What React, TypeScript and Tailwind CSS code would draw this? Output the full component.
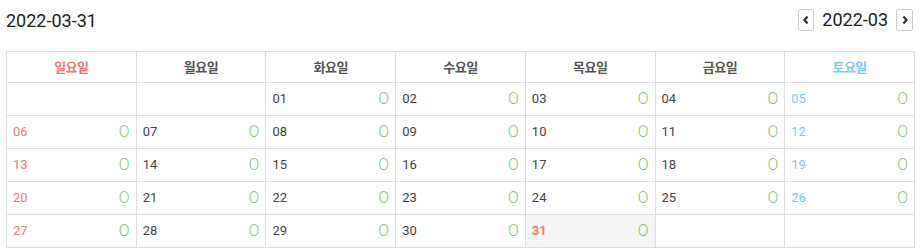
import React from "react";

const headers = ["일요일", "월요일", "화요일", "수요일", "목요일", "금요일", "토요일"];

function buildCells(): (number | null)[] {
  const cells: (number | null)[] = [null, null];
  for (let d = 1; d <= 31; d++) cells.push(d);
  while (cells.length < 35) cells.push(null);
  return cells;
}

export default function App() {
  const cells = buildCells();
  return (
    <div className="w-[922px] h-[249px] bg-white" style={{ fontFamily: "Roboto, 'Noto Sans CJK KR', sans-serif" }}>
      <div className="flex justify-between pl-[6px] pr-[9px] pt-[8px] h-[43px] items-start">
        <div className="text-[18px] leading-[24px] text-[#222] mt-[1px]">2022-03-31</div>
        <div className="flex items-center gap-[8px]">
          <button className="w-[16px] h-[22px] border border-[#ccc] rounded-[2px] flex items-center justify-center bg-white">
            <svg width="8" height="10" viewBox="0 0 8 10"><path d="M5.5 1.5 L2.5 5 L5.5 8.5" stroke="#333" strokeWidth="2.2" fill="none" /></svg>
          </button>
          <div className="text-[18px] leading-[24px] text-[#222]">2022-03</div>
          <button className="w-[17px] h-[22px] border border-[#ccc] rounded-[2px] flex items-center justify-center bg-white">
            <svg width="8" height="10" viewBox="0 0 8 10"><path d="M2.5 1.5 L5.5 5 L2.5 8.5" stroke="#333" strokeWidth="2.2" fill="none" /></svg>
          </button>
        </div>
      </div>
      <div className="ml-[6px] w-[909px] mt-[8px] border-l border-t border-[#ddd] grid grid-cols-7">
        {headers.map((h, i) => (
          <div
            key={h}
            className={`h-[31px] border-r border-b border-[#ddd] flex items-center justify-center text-[13px] font-bold tracking-[-0.5px] ${
              i === 0 ? "text-[#f07878]" : i === 6 ? "text-[#7cc8ee]" : "text-[#555]"
            }`}
            style={{ fontFamily: "'Noto Sans CJK KR', sans-serif" }}
          >
            {h}
          </div>
        ))}
        {cells.map((d, idx) => {
          const col = idx % 7;
          const today = d === 31;
          const color = today
            ? "text-[#f0845c] font-bold"
            : col === 0
            ? "text-[#e57e7e]"
            : col === 6
            ? "text-[#7cc4e8]"
            : "text-[#444]";
          return (
            <div
              key={idx}
              className={`h-[33px] border-r border-b border-[#ddd] flex items-center justify-between pl-[6px] pr-[6px] ${
                today ? "bg-[#f4f4f4]" : "bg-white"
              }`}
            >
              {d !== null && (
                <>
                  <span className={`text-[13px] ${color}`}>{String(d).padStart(2, "0")}</span>
                  <span className="text-[16px] font-light text-[#8cc472]">O</span>
                </>
              )}
            </div>
          );
        })}
      </div>
    </div>
  );
}
